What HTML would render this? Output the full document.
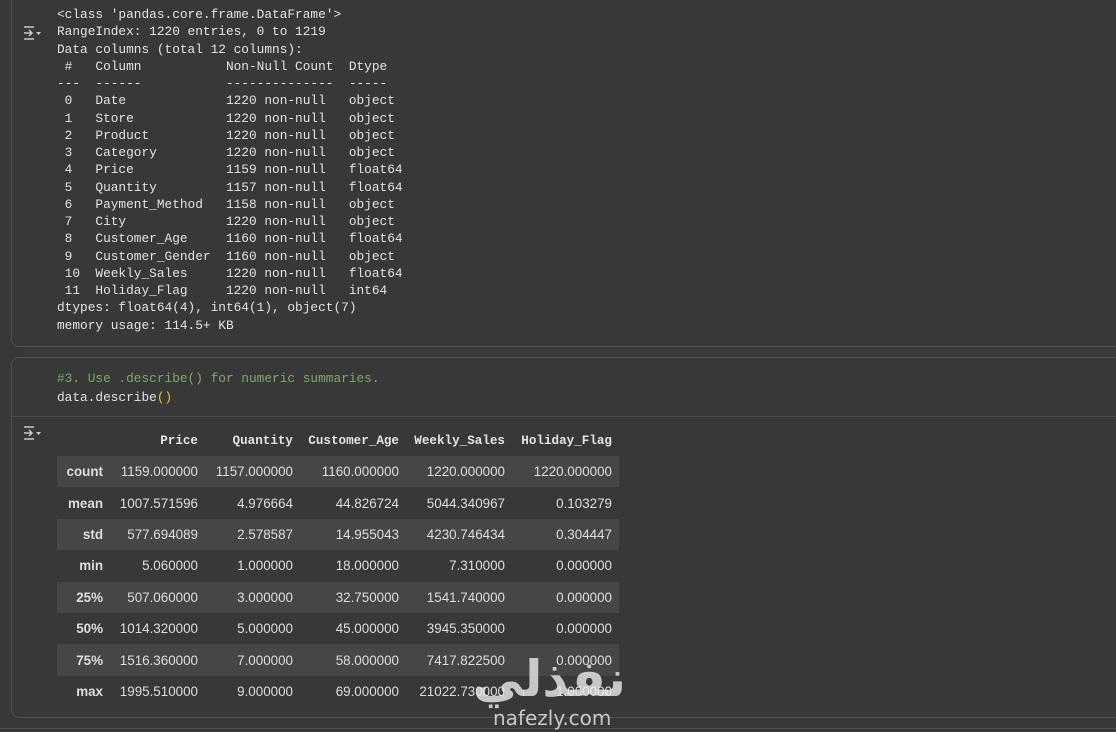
<!DOCTYPE html>
<html><head><meta charset="utf-8"><style>
body{margin:0;background:#383838;width:1116px;height:732px;overflow:hidden;position:relative;font-family:"Liberation Sans",sans-serif;color:#e3e3e3}
.cell{position:absolute;left:11px;right:-10px;border:1px solid #505050;border-radius:8px}
pre{margin:0;font-family:"Liberation Mono",monospace;font-size:12.8px;line-height:17.25px;color:#e3e3e3;position:absolute;left:57px}
.icon{position:absolute;left:22px}
table{position:absolute;left:57px;top:425px;border-collapse:collapse;font-size:13.4px;table-layout:fixed;width:562px}
th{font-family:"Liberation Mono",monospace;font-weight:bold;font-size:12.6px;text-align:right;height:31px;padding:0 7px 0 0;color:#e3e3e3;white-space:nowrap}
td{text-align:right;height:31.4px;padding:0 7px 0 0;color:#dedede;white-space:nowrap}
td.i{font-weight:bold}
tr.s{background:#464646}
</style></head><body>
<div class="cell" style="top:-10px;height:355px"></div>
<svg class="icon" style="top:25px" width="20" height="16" viewBox="0 0 20 16" fill="none" stroke="#c8c8c8" stroke-width="1.5"><path d="M2 2h10M2 14h10M2 8h8M7 5l3 3-3 3"/><path d="M14 7h5l-2.5 3z" fill="#c8c8c8" stroke="none"/></svg>
<pre style="top:6px">&lt;class 'pandas.core.frame.DataFrame'&gt;
RangeIndex: 1220 entries, 0 to 1219
Data columns (total 12 columns):
 #   Column           Non-Null Count  Dtype  
---  ------           --------------  -----  
 0   Date             1220 non-null   object 
 1   Store            1220 non-null   object 
 2   Product          1220 non-null   object 
 3   Category         1220 non-null   object 
 4   Price            1159 non-null   float64
 5   Quantity         1157 non-null   float64
 6   Payment_Method   1158 non-null   object 
 7   City             1220 non-null   object 
 8   Customer_Age     1160 non-null   float64
 9   Customer_Gender  1160 non-null   object 
 10  Weekly_Sales     1220 non-null   float64
 11  Holiday_Flag     1220 non-null   int64  
dtypes: float64(4), int64(1), object(7)
memory usage: 114.5+ KB</pre>
<div class="cell" style="top:357px;height:359px"></div>
<div style="position:absolute;left:12px;right:0;top:416px;border-top:1px solid #4a4a4a"></div>
<pre style="top:369px;line-height:19px"><span style="color:#7fa96a">#3. Use .describe() for numeric summaries.</span>
data.describe<span style="color:#f2c12e">()</span></pre>
<svg class="icon" style="top:425px" width="20" height="16" viewBox="0 0 20 16" fill="none" stroke="#c8c8c8" stroke-width="1.5"><path d="M2 2h10M2 14h10M2 8h8M7 5l3 3-3 3"/><path d="M14 7h5l-2.5 3z" fill="#c8c8c8" stroke="none"/></svg>
<table>
<colgroup><col style="width:53px"><col style="width:95px"><col style="width:95px"><col style="width:106px"><col style="width:106px"><col style="width:107px"></colgroup>
<tr><th></th><th>Price</th><th>Quantity</th><th>Customer_Age</th><th>Weekly_Sales</th><th>Holiday_Flag</th></tr>
<tr class="s"><td class="i">count</td><td>1159.000000</td><td>1157.000000</td><td>1160.000000</td><td>1220.000000</td><td>1220.000000</td></tr>
<tr><td class="i">mean</td><td>1007.571596</td><td>4.976664</td><td>44.826724</td><td>5044.340967</td><td>0.103279</td></tr>
<tr class="s"><td class="i">std</td><td>577.694089</td><td>2.578587</td><td>14.955043</td><td>4230.746434</td><td>0.304447</td></tr>
<tr><td class="i">min</td><td>5.060000</td><td>1.000000</td><td>18.000000</td><td>7.310000</td><td>0.000000</td></tr>
<tr class="s"><td class="i">25%</td><td>507.060000</td><td>3.000000</td><td>32.750000</td><td>1541.740000</td><td>0.000000</td></tr>
<tr><td class="i">50%</td><td>1014.320000</td><td>5.000000</td><td>45.000000</td><td>3945.350000</td><td>0.000000</td></tr>
<tr class="s"><td class="i">75%</td><td>1516.360000</td><td>7.000000</td><td>58.000000</td><td>7417.822500</td><td>0.000000</td></tr>
<tr><td class="i">max</td><td>1995.510000</td><td>9.000000</td><td>69.000000</td><td>21022.730000</td><td>1.000000</td></tr>
</table>
<div style="position:absolute;left:0;right:0;top:728px;border-top:1px solid #505050"></div>
<div style="position:absolute;left:494px;top:650px;width:132px;text-align:center;color:rgba(235,235,235,0.8);font:bold 50px 'Noto Sans CJK SC','DejaVu Sans',sans-serif;line-height:50px;direction:rtl">نفذلي</div>
<div style="position:absolute;left:493px;top:706px;color:rgba(235,235,235,0.8);font:20px 'DejaVu Sans',sans-serif;line-height:24px">nafezly.com</div>
</body></html>
